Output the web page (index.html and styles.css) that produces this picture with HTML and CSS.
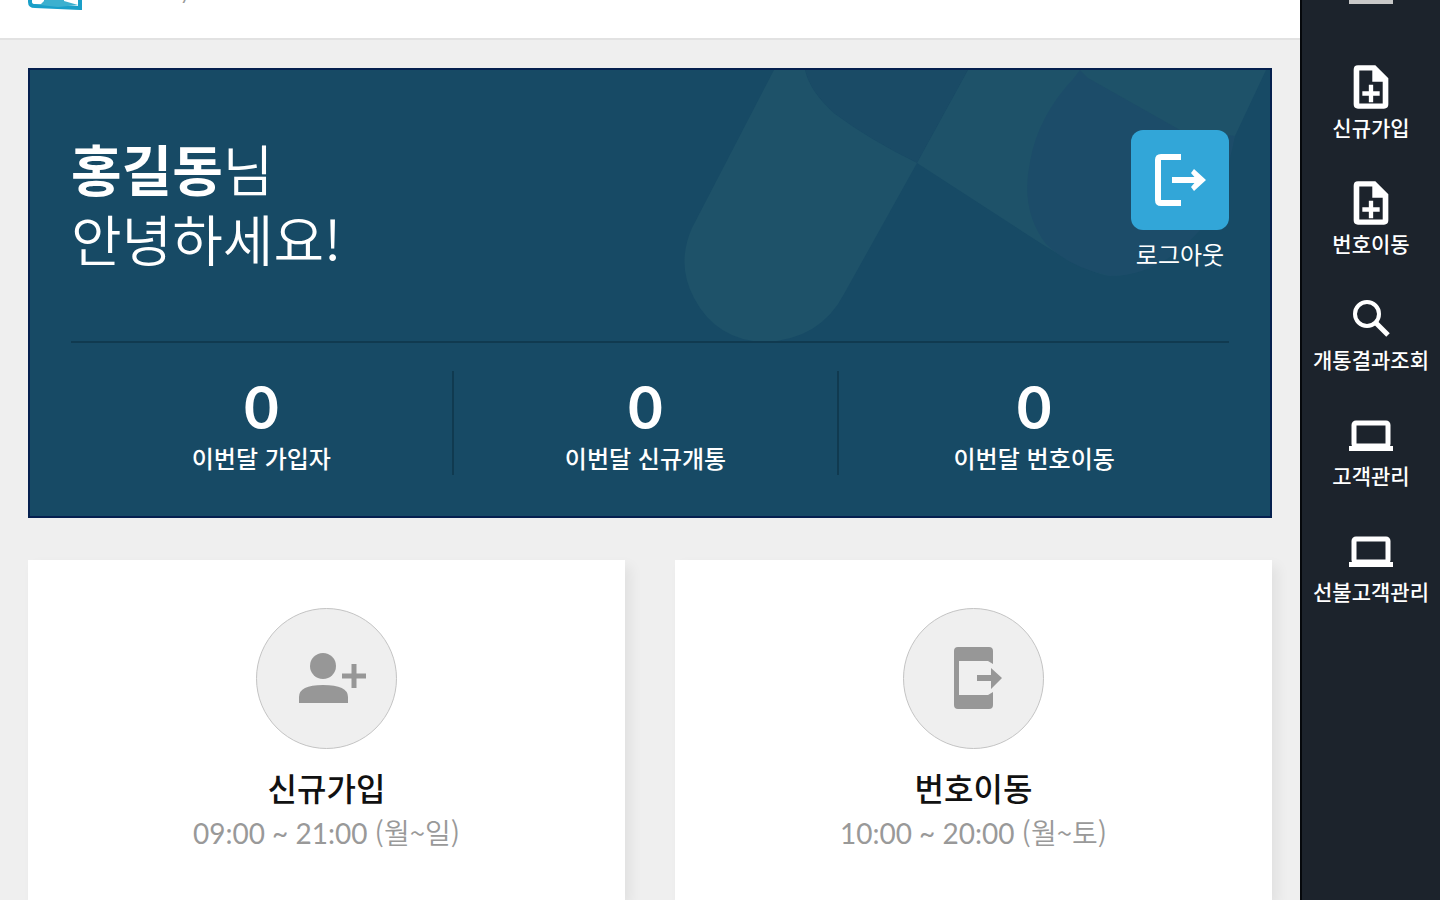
FILE: index.html
```
<!DOCTYPE html>
<html lang="ko">
  <head>
    <meta charset="UTF-8" />
    <meta name="viewport" content="width=device-width, initial-scale=1" />
    <title>대시보드</title>
    <link rel="stylesheet" href="styles.css">
  </head>
  <body>
    <div class="main">
      <header class="topbar">
        <svg class="logo" width="56" height="40" viewBox="0 0 56 40" aria-hidden="true">
          <path d="M2 4V32Q2 36 7 36L52 38V4Z" fill="#fff" stroke="#1a9fc8" stroke-width="4" />
          <path d="M16 4H36V31L50 35L30 37L12 35L16 31Z" fill="#3cb0cf" />
        </svg>
        <span class="brand">y</span>
      </header>

      <main class="content">
        <section class="banner">
          <svg class="banner-bg" width="590" height="274" viewBox="0 0 590 274" aria-hidden="true">
            <path d="M125 0H288L237 93Q190 70 155 44Q130 22 125 0Z" fill="#1a4b66" />
            <path d="M94 0H125Q130 22 155 44Q190 70 237 93L164 224Q140 270 84 272Q36 270 14 228Q-4 194 12 158Z" fill="#1e5269" />
            <path d="M288 0H586L555 66Q510 206 430 206Q408 204 351 167L237 93Z" fill="#1e5269" />
            <path d="M400 0L408 8L500 60L555 66Q545 120 520 160Q480 206 430 206Q390 198 366 174Q340 140 350 92Q358 46 394 8Z" fill="#1c4c69" />
          </svg>
          <div class="banner-top">
            <h1><strong>홍길동</strong>님<br>안녕하세요!</h1>
            <button type="button" class="logout">
              <span class="logout-icon">
                <svg width="52" height="52" viewBox="0 0 52 52" aria-hidden="true">
                  <path d="M27 3H7Q4 3 4 6V46Q4 49 7 49H27" fill="none" stroke="#fff" stroke-width="6" />
                  <path d="M18 26H46" stroke="#fff" stroke-width="6" />
                  <path d="M40 15L52 26L40 37L37 33L43 26L37 19Z" fill="#fff" />
                </svg>
              </span>
              로그아웃
            </button>
          </div>
          <ul class="stats">
            <li><b>0</b><span>이번달 가입자</span></li>
            <li><b>0</b><span>이번달 신규개통</span></li>
            <li><b>0</b><span>이번달 번호이동</span></li>
          </ul>
        </section>

        <div class="cards">
          <a href="#" class="card">
            <span class="circle">
              <svg width="140" height="140" viewBox="0 0 140 140" aria-hidden="true">
                <circle cx="66" cy="57" r="13" fill="#979797" />
                <path d="M42 94V88Q42 76 66 76Q91 76 91 88V94Z" fill="#979797" />
                <path d="M85 67H109M97 55V79" stroke="#979797" stroke-width="5" />
              </svg>
            </span>
            <strong>신규가입</strong>
            <span class="time">09:00 ~ 21:00 <span class="days">(월~일)</span></span>
          </a>
          <a href="#" class="card">
            <span class="circle">
              <svg width="140" height="140" viewBox="0 0 140 140" aria-hidden="true">
                <path d="M54 38H85Q89 38 89 42V55L84 52H55V86H84L89 83V96Q89 100 85 100H54Q50 100 50 96V42Q50 38 54 38Z" fill="#979797" />
                <path d="M73 66H87V59L98 69L87 80V72H73Z" fill="#979797" />
              </svg>
            </span>
            <strong>번호이동</strong>
            <span class="time">10:00 ~ 20:00 <span class="days">(월~토)</span></span>
          </a>
        </div>
      </main>
    </div>

    <nav class="sidebar">
      <button type="button" class="menu" aria-label="메뉴"></button>
      <a href="#">
        <svg width="52" height="52" viewBox="0 0 24 24" aria-hidden="true">
          <path fill-rule="evenodd" d="M14 2H6Q4 2 4 4V20Q4 22 6 22H18Q20 22 20 20V8ZM6.6 4.4H12.6V9.6H17.4V19.6H6.6Z" />
          <path d="M11 11H13V14H16V16H13V19H11V16H8V14H11Z" />
        </svg>
        <span>신규가입</span>
      </a>
      <a href="#">
        <svg width="52" height="52" viewBox="0 0 24 24" aria-hidden="true">
          <path fill-rule="evenodd" d="M14 2H6Q4 2 4 4V20Q4 22 6 22H18Q20 22 20 20V8ZM6.6 4.4H12.6V9.6H17.4V19.6H6.6Z" />
          <path d="M11 11H13V14H16V16H13V19H11V16H8V14H11Z" />
        </svg>
        <span>번호이동</span>
      </a>
      <a href="#">
        <svg width="52" height="52" viewBox="0 0 52 52" aria-hidden="true">
          <circle cx="22" cy="21" r="12" fill="none" stroke="#fff" stroke-width="4" />
          <path d="M30 29L43 42" stroke="#fff" stroke-width="5" />
        </svg>
        <span>개통결과조회</span>
      </a>
      <a href="#">
        <svg width="52" height="52" viewBox="0 0 52 52" aria-hidden="true">
          <rect x="9" y="14" width="34" height="23" rx="2" fill="none" stroke="#fff" stroke-width="5" />
          <path d="M4 37H48V42H4Z" />
        </svg>
        <span>고객관리</span>
      </a>
      <a href="#">
        <svg width="52" height="52" viewBox="0 0 52 52" aria-hidden="true">
          <rect x="9" y="14" width="34" height="23" rx="2" fill="none" stroke="#fff" stroke-width="5" />
          <path d="M4 37H48V42H4Z" />
        </svg>
        <span>선불고객관리</span>
      </a>
    </nav>
  </body>
</html>
```
FILE: styles.css
```
* {
  box-sizing: border-box;
}

body {
  margin: 0;
  display: flex;
  height: 100vh;
  overflow: hidden;
  background: #efefef;
  color: #111;
  font-family: "Noto Sans CJK KR", sans-serif;
}

a {
  color: inherit;
  text-decoration: none;
}

button {
  padding: 0;
  border: none;
  background: none;
  color: inherit;
  font: inherit;
  cursor: pointer;
}

.main {
  flex: 1;
  display: flex;
  flex-direction: column;
}

.topbar {
  display: flex;
  align-items: flex-end;
  gap: 96px;
  height: 40px;
  padding: 0 28px 28px;
  overflow: hidden;
  border-bottom: 2px solid #e2e2e2;
  background: #fff;
}

.topbar > * {
  flex-shrink: 0;
}

.brand {
  color: #999;
  font-family: Lato, sans-serif;
  font-size: 20px;
  line-height: 36px;
}

.content {
  flex: 1;
  display: flex;
  flex-direction: column;
  gap: 42px;
  padding: 28px 28px 0;
}

.banner {
  position: relative;
  height: 450px;
  padding: 60px 41px 0;
  border: 2px solid #05204f;
  background: #174a65;
  color: #fff;
}

.banner-bg {
  position: absolute;
  top: 0;
  right: 0;
}

.banner-top {
  position: relative;
  display: flex;
  justify-content: space-between;
  height: 213px;
  border-bottom: 2px solid #103a50;
}

h1 {
  margin: 0;
  padding-top: 2px;
  font-size: 55px;
  font-weight: 350;
  line-height: 70px;
}

h1 strong {
  font-weight: 700;
}

.logout {
  align-self: flex-start;
  width: 98px;
  font-size: 24px;
  line-height: 28px;
}

.logout-icon {
  display: flex;
  align-items: center;
  justify-content: center;
  height: 100px;
  margin-bottom: 10px;
  border-radius: 12px;
  background: #32a6d8;
}

.stats {
  display: grid;
  grid-template-columns: 383fr 386fr 390fr;
  margin: 28px 0 0;
  padding: 0;
  list-style: none;
  text-align: center;
}

.stats li {
  height: 104px;
  border-right: 2px solid #103a50;
}

.stats li:last-child {
  border: none;
}

.stats b,
.stats span {
  display: block;
}

.stats b {
  font-family: Lato, sans-serif;
  font-size: 60px;
  font-weight: 700;
  line-height: 70px;
}

.stats span {
  font-size: 24px;
  font-weight: 500;
  line-height: 34px;
}

.cards {
  flex: 1;
  display: grid;
  grid-template-columns: 1fr 1fr;
  gap: 50px;
}

.card {
  display: flex;
  flex-direction: column;
  align-items: center;
  padding-top: 48px;
  background: #fff;
  box-shadow: 6px 6px 12px rgba(0, 0, 0, 0.06);
}

.circle {
  width: 141px;
  height: 141px;
  border: 1px solid #c4c4c4;
  border-radius: 50%;
  background: #efefef;
}

.card strong {
  margin-top: 15px;
  font-size: 32px;
  font-weight: 500;
  line-height: 46px;
}

.time {
  color: #999;
  font-family: Lato, "Noto Sans CJK KR", sans-serif;
  font-size: 28px;
  line-height: 44px;
}

.days {
  font-family: "Noto Sans CJK KR", sans-serif;
  font-weight: 350;
}

.sidebar {
  display: flex;
  flex-direction: column;
  gap: 36px;
  width: 140px;
  border-left: 2px solid #05080c;
  background: #1c232c;
  color: #fff;
}

.menu {
  align-self: center;
  width: 44px;
  height: 26px;
  border-bottom: 4px solid #c8c8c8;
  margin-top: -22px;
  margin-bottom: 21px;
}

.sidebar a {
  display: flex;
  flex-direction: column;
  align-items: center;
  font-size: 21px;
  font-weight: 500;
  line-height: 28px;
  white-space: nowrap;
}

.sidebar svg {
  fill: #fff;
}
```
